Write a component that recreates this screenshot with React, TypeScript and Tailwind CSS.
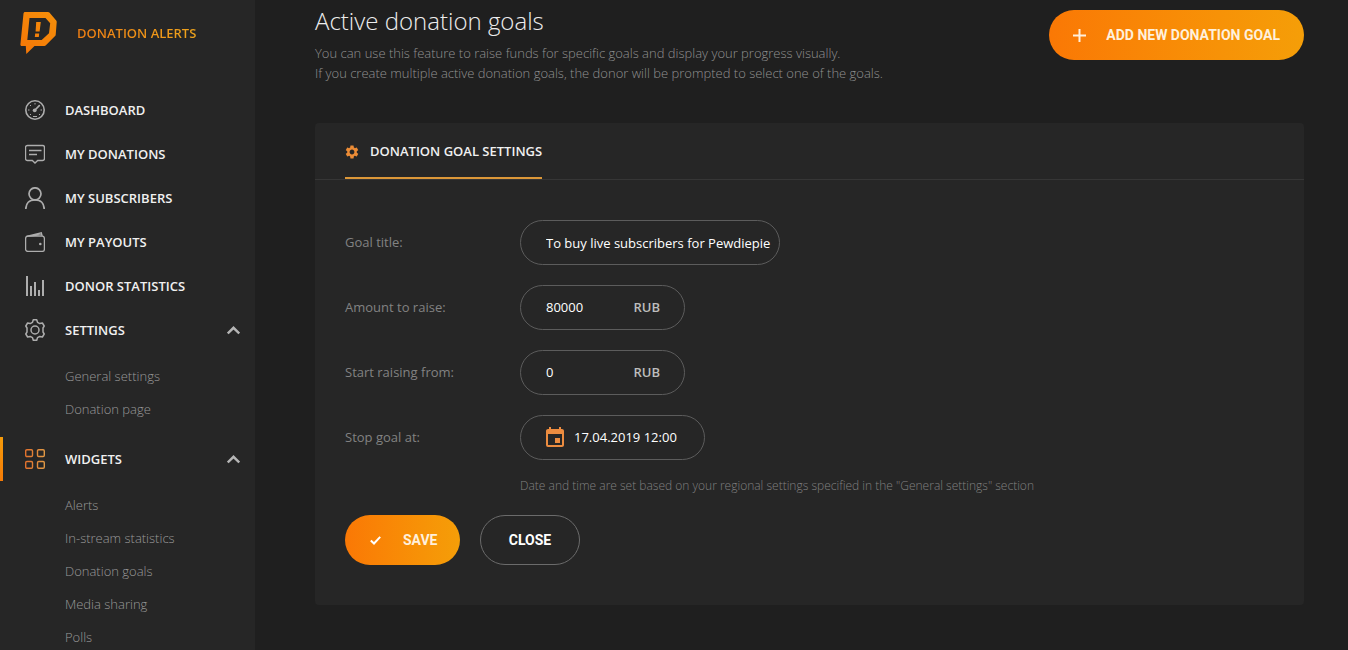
import React, { useState } from 'react'
import { MdEvent, MdSettings } from 'react-icons/md'

interface NavItem {
  label: string
  icon: React.ReactNode
  active?: boolean
  children?: string[]
}

const LogoIcon = () => (
  <svg width="37" height="44" viewBox="0 0 37 44" fill="none">
    <defs>
      <linearGradient id="logo" x1="0" y1="44" x2="38" y2="0" gradientUnits="userSpaceOnUse">
        <stop stopColor="#f57507" />
        <stop offset="1" stopColor="#f5900a" />
      </linearGradient>
    </defs>
    <path
      fill="url(#logo)"
      fillRule="evenodd"
      d="M3.500 1.500c.1-.9.7-1.500 1.600-1.500H28c.6 0 1 .2 1.400.6l6.800 8c.4.500.6 1 .5 1.600l-1 12.500c0 .6-.2 1-.6 1.400l-9.200 9.200c-.4.4-.9.700-1.500.700H14.500L6.300 42 5.800 34H1.800c-.9 0-1.500-.6-1.400-1.500zM9.500 6 7.300 28h14.400l7.300-6.800 1.200-10L25.500 6z"
    />
    <path fill="url(#logo)" d="M16.200 10h4.600l-1.200 9.500h-4zM15.200 21.500h4l-.4 3.500h-4z" />
  </svg>
)

const DashboardIcon = () => (
  <svg width="20" height="20" viewBox="0 0 20 20" fill="none" stroke="currentColor">
    <circle cx="10" cy="10" r="9.200" strokeWidth="1.600" />
    <circle cx="9.700" cy="10.300" r="1.900" fill="currentColor" stroke="none" />
    <path d="m10 10 4.300-4.300" strokeWidth="1.700" strokeLinecap="round" />
    <path d="M10 3v1.500M3 10h1.500M15.500 10H17M5 5l1 1M5 15l1-1M15 15l-1-1M8 16.500h4" strokeWidth="1" />
  </svg>
)

const DonationsIcon = () => (
  <svg width="20" height="20" viewBox="0 0 20 20" fill="none" stroke="currentColor" strokeWidth="1.400">
    <path d="M2.500 1.500h15a2 2 0 0 1 2 2v11a2 2 0 0 1-2 2h-4.800L10 19l-2.700-2.500H2.500a2 2 0 0 1-2-2v-11a2 2 0 0 1 2-2z" />
    <path d="M4 6.500h12.500M4 10.500h8" />
  </svg>
)

const SubscribersIcon = () => (
  <svg width="20" height="22" viewBox="0 0 20 22" fill="none" stroke="currentColor" strokeWidth="1.700">
    <circle cx="10" cy="6.800" r="6" />
    <path d="M.8 22c0-5.500 3.400-9.200 9.200-9.200s9.200 3.700 9.200 9.200" />
  </svg>
)

const PayoutsIcon = () => (
  <svg width="20" height="20" viewBox="0 0 20 20" fill="none" stroke="currentColor" strokeWidth="1.300">
    <rect x=".6" y="4.200" width="18.800" height="15.200" rx="2.200" />
    <path d="M1.500 4.500 16.300.8l.9 3.200M4.500 4l12.200-1.400" />
    <circle cx="15.300" cy="12" r="1.300" fill="currentColor" stroke="none" />
  </svg>
)

const StatisticsIcon = () => (
  <svg width="20" height="20" viewBox="0 0 20 20" fill="currentColor">
    <path d="M1 0h2v20H1zM5 10h2v10H5zM9 6h2v14H9zM13 14h2v6h-2zM17 4h2v16h-2z" />
  </svg>
)

const SettingsIcon = () => (
  <svg width="20" height="22" viewBox="0 0 20 22" fill="none" stroke="currentColor" strokeWidth="1.500" strokeLinejoin="round">
    <path d="M8.300.8h3.400l.8 2.500 2.300 1.300 2.600-.6 1.800 3-1.200 2v4l1.200 2-1.800 3-2.600-.6-2.300 1.300-.8 2.500H8.300l-.8-2.500-2.300-1.300-2.600.6-1.800-3 1.200-2V9L.8 7l1.800-3 2.600.6 2.300-1.300z" />
    <circle cx="10" cy="11" r="4" />
  </svg>
)

const WidgetsIcon = () => (
  <svg width="20" height="20" viewBox="0 0 20 20" fill="none" strokeWidth="1.400">
    <defs>
      <linearGradient id="widgets" x1="0" y1="0" x2="20" y2="0" gradientUnits="userSpaceOnUse">
        <stop stopColor="#e2702c" />
        <stop offset="1" stopColor="#e29a45" />
      </linearGradient>
    </defs>
    <g stroke="url(#widgets)">
      <rect x=".7" y=".7" width="6.800" height="6.800" rx="1.200" />
      <rect x="12.500" y=".7" width="6.800" height="6.800" rx="1.200" />
      <rect x=".7" y="12.500" width="6.800" height="6.800" rx="1.200" />
      <rect x="12.500" y="12.500" width="6.800" height="6.800" rx="1.200" />
    </g>
  </svg>
)

const navItems: NavItem[] = [
  { label: 'DASHBOARD', icon: <DashboardIcon /> },
  { label: 'MY DONATIONS', icon: <DonationsIcon /> },
  { label: 'MY SUBSCRIBERS', icon: <SubscribersIcon /> },
  { label: 'MY PAYOUTS', icon: <PayoutsIcon /> },
  { label: 'DONOR STATISTICS', icon: <StatisticsIcon /> },
  {
    label: 'SETTINGS',
    icon: <SettingsIcon />,
    children: ['General settings', 'Donation page']
  },
  {
    label: 'WIDGETS',
    icon: <WidgetsIcon />,
    active: true,
    children: ['Alerts', 'In-stream statistics', 'Donation goals', 'Media sharing', 'Polls']
  }
]

const Sidebar: React.FC = () => {
  const [closed, setClosed] = useState<string[]>([])

  const toggle = (label: string) => {
    setClosed(
      closed.includes(label) ? closed.filter((l) => l !== label) : [...closed, label]
    )
  }

  return (
    <aside className="sticky top-0 h-screen w-[255px] shrink-0 overflow-hidden bg-[#262626]">
      {/* Logo */}
      <a href="#" className="flex h-[88px] items-start gap-5 pl-5 pt-3">
        <LogoIcon />
        <span className="pt-3 text-[13px] leading-[18px] font-semibold bg-gradient-to-r from-[#ee7d12] to-[#eea31c] bg-clip-text text-transparent">
          DONATION ALERTS
        </span>
      </a>

      <nav>
        {navItems.map((item) => {
          const isOpen = item.children && !closed.includes(item.label)
          const row = (
            <>
              <span className="flex w-5 justify-center text-[#adadad]">{item.icon}</span>
              <span className="flex-1 pt-px text-left">{item.label}</span>
            </>
          )
          return (
            <div key={item.label}>
              {item.children ? (
                <button
                  onClick={() => toggle(item.label)}
                  className="relative flex h-11 w-full items-center gap-5 pl-[25px] pr-[15px] text-[13px] font-semibold text-[#f0f0f0]"
                >
                  {item.active && (
                    <span className="absolute left-0 top-0 h-full w-[3px] bg-gradient-to-b from-[#f59b0a] to-[#f57b07]" />
                  )}
                  {row}
                  <svg
                    width="13"
                    height="9"
                    viewBox="0 0 13 9"
                    fill="none"
                    stroke="#b5b5b5"
                    strokeWidth="2.400"
                    className={isOpen ? '' : 'rotate-180'}
                  >
                    <path d="m.8 7.500 5.700-5.700 5.700 5.700" />
                  </svg>
                </button>
              ) : (
                <a
                  href="#"
                  className="flex h-11 items-center gap-5 pl-[25px] text-[13px] font-semibold text-[#f0f0f0]"
                >
                  {row}
                </a>
              )}
              {isOpen && (
                <ul className="pt-2 pb-[11px]">
                  {item.children?.map((child) => (
                    <li key={child}>
                      <a
                        href="#"
                        className="flex h-[33px] items-center pl-[65px] text-[13px] font-light text-[#999999]"
                      >
                        {child}
                      </a>
                    </li>
                  ))}
                </ul>
              )}
            </div>
          )
        })}
      </nav>
    </aside>
  )
}

const App: React.FC = () => {
  const [title, setTitle] = useState('To buy live subscribers for Pewdiepie')
  const [amount, setAmount] = useState('80000')
  const [start, setStart] = useState('0')
  const [stopAt, setStopAt] = useState('17.04.2019 12:00')

  const handleSubmit = (e: React.FormEvent) => {
    e.preventDefault()
  }

  return (
    <div className="flex min-h-screen bg-[#1f1f1f] font-['Open_Sans',sans-serif]">
      <Sidebar />

      <main className="min-w-0 flex-1 pl-[60px] pr-11 pb-11">
        {/* Page header */}
        <header className="flex items-start justify-between gap-6 pt-[5px]">
          <div>
            <h1 className="text-2xl leading-8 font-light text-[#ededed]">
              Active donation goals
            </h1>
            <p className="mt-[6px] text-[13px] leading-5 font-light text-[#919191]">
              You can use this feature to raise funds for specific goals and display your
              progress visually.
              <br />
              If you create multiple active donation goals, the donor will be prompted to
              select one of the goals.
            </p>
          </div>
          <button className="mt-[5px] flex h-[50px] shrink-0 items-center gap-5 rounded-full bg-gradient-to-r from-[#fa7805] to-[#f59e08] px-6 font-['Roboto',sans-serif] text-sm font-bold text-[#fff0dc]">
            <svg width="13" height="13" viewBox="0 0 13 13" stroke="currentColor" strokeWidth="2">
              <path d="M6.500 0v13M0 6.500h13" />
            </svg>
            ADD NEW DONATION GOAL
          </button>
        </header>

        <section className="mt-10 rounded bg-[#262626]">
          <div className="flex border-b border-[#363636] px-[30px]">
            <button className="flex h-14 items-center gap-[10px] border-b-2 border-[#dc9738] pt-[3px] text-[13px] font-semibold text-[#f0f0f0]">
              <MdSettings className="size-4 -ml-px text-[#ec8c36]" />
              DONATION GOAL SETTINGS
            </button>
          </div>

          <form onSubmit={handleSubmit} className="px-[30px] pt-10 pb-10">
            <div className="flex flex-col gap-5 text-[13px] text-white">
              <div className="flex items-center">
                <label htmlFor="title" className="w-[175px] pt-px text-[#828282]">
                  Goal title:
                </label>
                <input
                  id="title"
                  value={title}
                  onChange={(e) => setTitle(e.target.value)}
                  className="h-[45px] w-[260px] rounded-full border border-[#5c5c5c] pl-[25px] focus:outline-none"
                />
              </div>
              <div className="flex items-center">
                <label htmlFor="amount" className="w-[175px] pt-px text-[#828282]">
                  Amount to raise:
                </label>
                <div className="flex h-[45px] w-[165px] items-center rounded-full border border-[#5c5c5c] pt-px pl-[25px] pr-6">
                  <input
                    id="amount"
                    value={amount}
                    onChange={(e) => setAmount(e.target.value)}
                    className="min-w-0 flex-1 focus:outline-none"
                  />
                  <span className="font-semibold text-[#bdbdbd]">RUB</span>
                </div>
              </div>
              <div className="flex items-center">
                <label htmlFor="start" className="w-[175px] pt-px text-[#828282]">
                  Start raising from:
                </label>
                <div className="flex h-[45px] w-[165px] items-center rounded-full border border-[#5c5c5c] pt-px pl-[25px] pr-6">
                  <input
                    id="start"
                    value={start}
                    onChange={(e) => setStart(e.target.value)}
                    className="min-w-0 flex-1 focus:outline-none"
                  />
                  <span className="font-semibold text-[#bdbdbd]">RUB</span>
                </div>
              </div>
              <div className="flex items-center">
                <label htmlFor="stop" className="w-[175px] pt-px text-[#828282]">
                  Stop goal at:
                </label>
                <div className="flex h-[45px] w-[185px] items-center gap-[7px] rounded-full border border-[#5c5c5c] pl-[22px] pr-4">
                  <MdEvent className="size-6 shrink-0 text-[#ec8c40]" />
                  <input
                    id="stop"
                    value={stopAt}
                    onChange={(e) => setStopAt(e.target.value)}
                    className="min-w-0 flex-1 focus:outline-none"
                  />
                </div>
              </div>
            </div>

            <p className="mt-4 pl-[175px] text-xs leading-5 font-light text-[#808080]">
              Date and time are set based on your regional settings specified in the
              "General settings" section
            </p>

            <div className="mt-[19px] flex gap-5 font-['Roboto',sans-serif] text-sm font-bold">
              <button
                type="submit"
                className="flex h-[50px] w-[115px] items-center gap-[22px] rounded-full bg-gradient-to-r from-[#fa7805] to-[#f59e08] pl-[25px] text-[#fff0dc]"
              >
                <svg width="11" height="9" viewBox="0 0 11 9" fill="none" stroke="#fff" strokeWidth="2">
                  <path d="m.8 4.500 3.200 3L10.200.9" />
                </svg>
                SAVE
              </button>
              <button
                type="button"
                className="h-[50px] w-[100px] rounded-full border border-[#6b6b6b] text-white"
              >
                CLOSE
              </button>
            </div>
          </form>
        </section>
      </main>
    </div>
  )
}

export default App
